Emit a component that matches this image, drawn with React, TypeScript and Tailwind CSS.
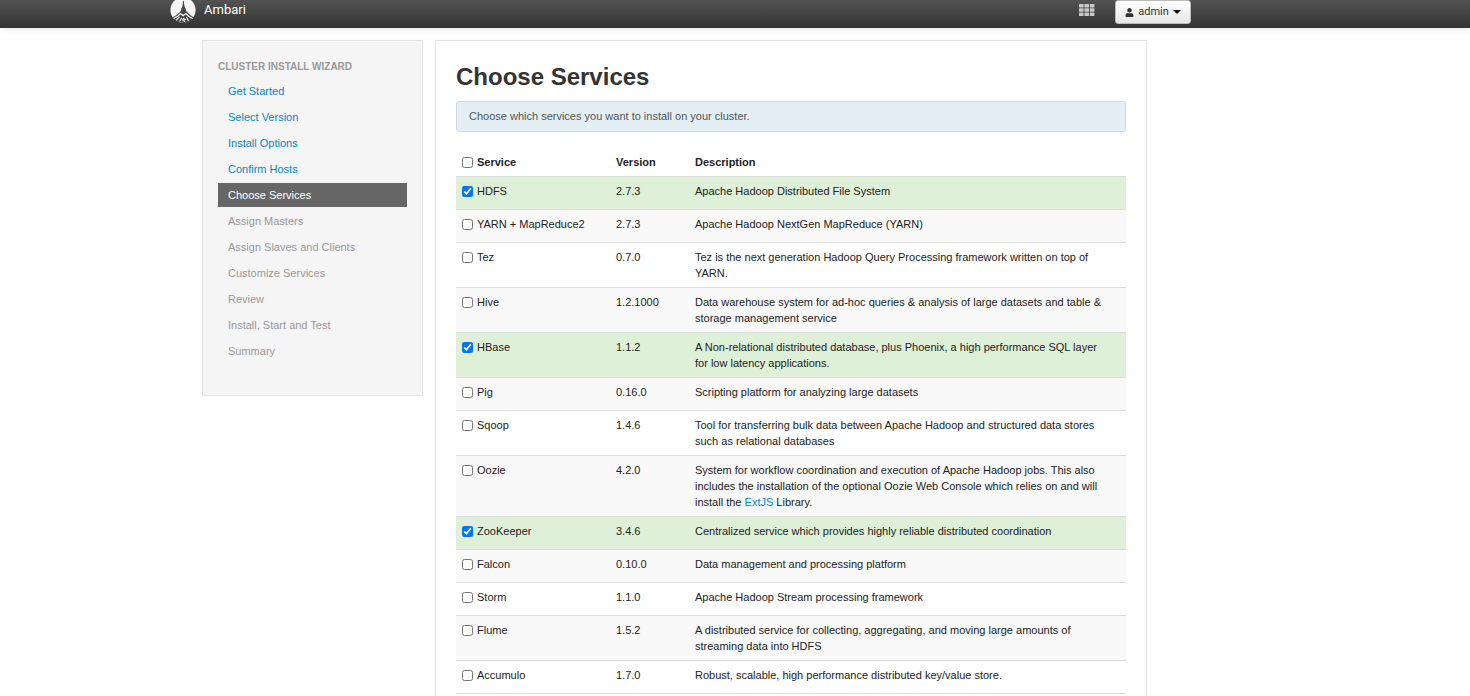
import { useState } from "react";
import type { ReactNode } from "react";
import { FaUser } from "react-icons/fa";

const steps = [
  "Get Started",
  "Select Version",
  "Install Options",
  "Confirm Hosts",
  "Choose Services",
  "Assign Masters",
  "Assign Slaves and Clients",
  "Customize Services",
  "Review",
  "Install, Start and Test",
  "Summary",
];

const currentStep = 4;

type Service = {
  name: string;
  version: string;
  description: ReactNode;
};

const services: Service[] = [
  { name: "HDFS", version: "2.7.3", description: "Apache Hadoop Distributed File System" },
  { name: "YARN + MapReduce2", version: "2.7.3", description: "Apache Hadoop NextGen MapReduce (YARN)" },
  {
    name: "Tez",
    version: "0.7.0",
    description: "Tez is the next generation Hadoop Query Processing framework written on top of YARN.",
  },
  {
    name: "Hive",
    version: "1.2.1000",
    description:
      "Data warehouse system for ad-hoc queries & analysis of large datasets and table & storage management service",
  },
  {
    name: "HBase",
    version: "1.1.2",
    description:
      "A Non-relational distributed database, plus Phoenix, a high performance SQL layer for low latency applications.",
  },
  { name: "Pig", version: "0.16.0", description: "Scripting platform for analyzing large datasets" },
  {
    name: "Sqoop",
    version: "1.4.6",
    description:
      "Tool for transferring bulk data between Apache Hadoop and structured data stores such as relational databases",
  },
  {
    name: "Oozie",
    version: "4.2.0",
    description: (
      <>
        System for workflow coordination and execution of Apache Hadoop jobs. This also includes the installation of
        the optional Oozie Web Console which relies on and will install the{" "}
        <a href="#extjs" className="text-[#0088cc] hover:underline">
          ExtJS
        </a>{" "}
        Library.
      </>
    ),
  },
  {
    name: "ZooKeeper",
    version: "3.4.6",
    description: "Centralized service which provides highly reliable distributed coordination",
  },
  { name: "Falcon", version: "0.10.0", description: "Data management and processing platform" },
  { name: "Storm", version: "1.1.0", description: "Apache Hadoop Stream processing framework" },
  {
    name: "Flume",
    version: "1.5.2",
    description:
      "A distributed service for collecting, aggregating, and moving large amounts of streaming data into HDFS",
  },
  {
    name: "Accumulo",
    version: "1.7.0",
    description: "Robust, scalable, high performance distributed key/value store.",
  },
];

function AmbariLogo() {
  return (
    <svg viewBox="0 0 26 26" className="-mt-[3px] size-[26px]" aria-hidden="true">
      <circle cx="13" cy="13" r="12.6" fill="#f4f4f4" />
      {/* spire */}
      <path
        d="M13 4 L13.8 4 L14.4 9 L15.6 11.5 L16 13.8 L18.3 16.2 L21.5 19 L24 20.500 L20.500 24 L14 26 L6 24.500 L2 20.500 L5.500 18.800 L9.500 15.500 L11 13.500 L11.300 11.500 L12.500 9 Z"
        fill="#474747"
      />
      {/* slopes */}
      <path
        d="M3.500 21.500 L8 19 L10.500 16.500 L13.200 18.600 L16 16.500 L19 19.500 L22.500 21.500"
        fill="none"
        stroke="#f4f4f4"
        strokeWidth="1.300"
      />
      <path
        d="M6 23.300 L9.500 20 M9.500 24.500 L12 21 M13.500 21 L14.500 25 M16.500 20 L18.500 24 M12 22.800 L16 22.300"
        stroke="#e2e2e2"
        strokeWidth="1.200"
      />
    </svg>
  );
}

function GridIcon() {
  return (
    <svg viewBox="0 0 16 12" className="h-3 w-4" fill="#c9c9c9" aria-hidden="true">
      {[0, 4.3, 8.6].map((y) =>
        [0, 5.4, 10.8].map((x) => <rect key={`${x}-${y}`} x={x} y={y} width="4.6" height="3.4" rx="0.4" />)
      )}
    </svg>
  );
}

function Caret() {
  return (
    <svg viewBox="0 0 8 4" className="h-1 w-2" aria-hidden="true">
      <path d="M0 0h8L4 4z" fill="#111111" />
    </svg>
  );
}

function Navbar() {
  return (
    <header className="h-7 bg-linear-to-b from-[#525252] to-[#333333] shadow-[0_1px_10px_rgba(0,0,0,0.1)]">
      <div className="ml-[170px] flex h-full max-w-[1021px] items-start">
        <a href="#home" className="flex items-start gap-2 text-white">
          <AmbariLogo />
          <span className="pt-0.5 font-[Roboto,sans-serif] text-[13px] leading-4">Ambari</span>
        </a>
        <button type="button" aria-label="Views" className="mt-1 mr-5 ml-auto cursor-pointer">
          <GridIcon />
        </button>
        <button
          type="button"
          className="flex h-6 w-[76px] cursor-pointer items-center justify-center gap-1 rounded-[3px] border border-[#bbbbbb] bg-linear-to-b from-white to-[#e6e6e6] font-[Roboto,sans-serif] text-[11px] text-[#333333]"
        >
          <FaUser className="size-[9px]" />
          admin
          <Caret />
        </button>
      </div>
    </header>
  );
}

function WizardMenu() {
  return (
    <aside className="w-[221px] shrink-0 border border-[#e3e3e3] bg-[#f5f5f5] px-[15px] pt-[18px] pb-8">
      <h2 className="text-[10px] leading-4 font-bold text-[#999999] uppercase">Cluster Install Wizard</h2>
      <ul className="mt-1 flex flex-col gap-0.5">
        {steps.map((step, index) => {
          if (index > currentStep) {
            return (
              <li key={step} className="px-2.5 py-1 leading-4 text-[#999999]">
                {step}
              </li>
            );
          }
          return (
            <li key={step}>
              <a
                href="#step"
                aria-current={index === currentStep ? "step" : undefined}
                className={
                  index === currentStep
                    ? "block bg-[#666666] px-2.5 py-1 leading-4 text-white"
                    : "block px-2.5 py-1 leading-4 text-[#0088cc]"
                }
              >
                {step}
              </a>
            </li>
          );
        })}
      </ul>
    </aside>
  );
}

export default function App() {
  const [selected, setSelected] = useState(["HDFS", "HBase", "ZooKeeper"]);

  const toggle = (name: string) =>
    setSelected((prev) => (prev.includes(name) ? prev.filter((item) => item !== name) : [...prev, name]));

  const allSelected = selected.length === services.length;

  return (
    <div className="h-screen overflow-hidden bg-white font-['Liberation_Sans',Arial,sans-serif] text-[11px] leading-4 text-[#333333]">
      <Navbar />
      <div className="mt-3 ml-[202px] flex max-w-[945px] items-start gap-3">
        <WizardMenu />
        <main className="min-w-0 flex-1 border border-[#e3e3e3] bg-white px-5 pt-5 pb-5">
          <h1 className="text-2xl leading-8 font-bold">Choose Services</h1>
          <p className="mt-2 rounded-[3px] border border-[#cfdadd] bg-[#e4eff5] px-3 py-1.5 leading-[17px] text-[#555555]">
            Choose which services you want to install on your cluster.
          </p>

          <table className="mt-4 w-full border-collapse text-left text-[#222222]">
            <thead>
              <tr>
                <th className="w-[154px] p-1.5 font-bold">
                  <label className="flex items-center gap-1">
                    <input
                      type="checkbox"
                      className="size-[11px]"
                      checked={allSelected}
                      onChange={() => setSelected(allSelected ? [] : services.map((service) => service.name))}
                    />
                    Service
                  </label>
                </th>
                <th className="w-[79px] p-1.5 font-bold">Version</th>
                <th className="py-1.5 pr-4 pl-1.5 font-bold">Description</th>
              </tr>
            </thead>
            <tbody>
              {services.map((service) => {
                const checked = selected.includes(service.name);
                return (
                  <tr
                    key={service.name}
                    className={
                      checked
                        ? "h-[33px] border-y border-[#dddddd] bg-[#def0d8] align-top"
                        : "h-[33px] border-y border-[#dddddd] align-top even:bg-[#f9f9f9]"
                    }
                  >
                    <td className="p-1.5">
                      <label className="flex items-center gap-1">
                        <input
                          type="checkbox"
                          className="size-[11px]"
                          checked={checked}
                          onChange={() => toggle(service.name)}
                        />
                        {service.name}
                      </label>
                    </td>
                    <td className="p-1.5">{service.version}</td>
                    <td className="py-1.5 pr-4 pl-1.5">{service.description}</td>
                  </tr>
                );
              })}
            </tbody>
          </table>
        </main>
      </div>
    </div>
  );
}
